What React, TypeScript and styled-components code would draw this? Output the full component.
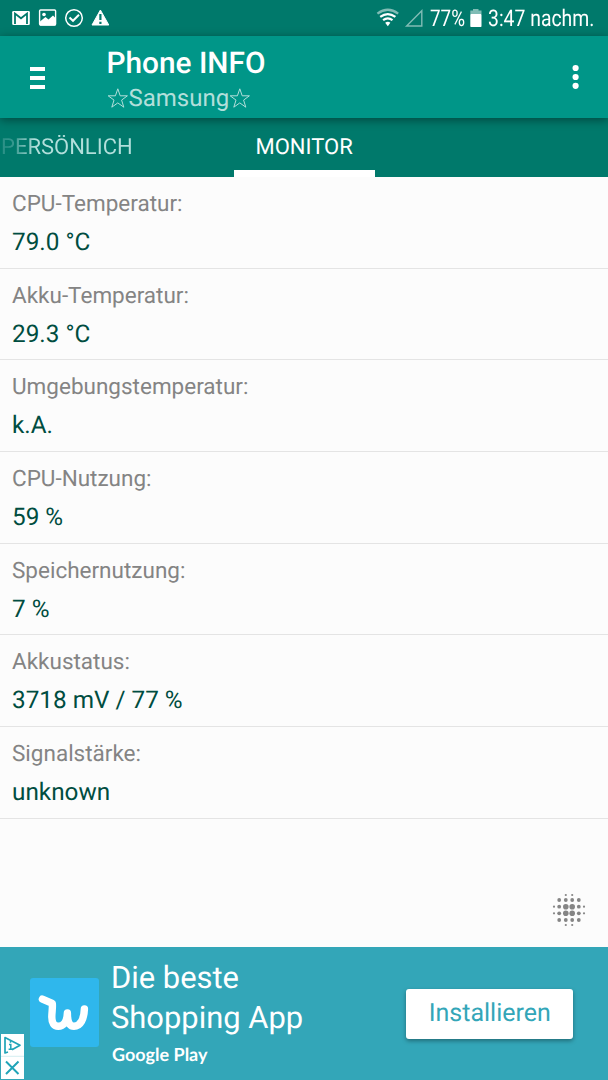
import React from 'react';
import styled, { createGlobalStyle } from 'styled-components';

const Global = createGlobalStyle`
  * { box-sizing: border-box; }
  html, body { margin: 0; padding: 0; }
  body {
    font-family: Roboto, "Noto Sans", sans-serif;
    background: #fcfcfc;
    text-rendering: geometricPrecision;
  }
`;

const Screen = styled.div`
  width: 608px;
  height: 1080px;
  display: flex;
  flex-direction: column;
  overflow: hidden;
  background: #fcfcfc;
`;

const StatusBar = styled.div`
  height: 36px;
  flex: none;
  display: flex;
  justify-content: space-between;
  background: #00796b;
  color: #fff;
`;

const StatusIcons = styled.svg`
  display: block;
  flex: none;
`;

const StatusRight = styled.div`
  display: flex;
  width: 232px;
`;

const StatusText = styled.span<{ $width: number; $scale: number }>`
  width: ${(p) => p.$width}px;
  font-size: 23px;
  line-height: 38px;
  white-space: nowrap;
  transform: scaleX(${(p) => p.$scale});
  transform-origin: 0 50%;
`;

const Toolbar = styled.header`
  height: 82px;
  flex: none;
  display: flex;
  align-items: flex-start;
  background: #009688;
  color: #fff;
  position: relative;
  box-shadow: 0 2px 9px rgba(0, 0, 0, 0.42);
`;

const IconButton = styled.button<{ $width: number }>`
  width: ${(p) => p.$width}px;
  height: 82px;
  padding: 0;
  border: 0;
  background: none;
  svg { display: block; }
`;

const Titles = styled.div`
  flex: 1;
  padding: 10px 0 0 32.5px;
`;

const Title = styled.h1`
  margin: 0;
  height: 34px;
  font-size: 29.8px;
  line-height: 35px;
  font-weight: 500;
  white-space: nowrap;
`;

const Subtitle = styled.div`
  display: flex;
  align-items: center;
  height: 36px;
  font-size: 24px;
  line-height: 36px;
  color: #b2dfdb;
`;

const Star = styled.svg`
  display: block;
  flex: none;
`;

const Tabs = styled.nav`
  height: 59px;
  flex: none;
  display: flex;
  background: #00796b;
`;

const Tab = styled.div<{ $active?: boolean; $width: number }>`
  width: ${(p) => p.$width}px;
  margin-left: ${(p) => (p.$active ? 101.5 : 0)}px;
  padding-left: ${(p) => (p.$active ? 22 : 1)}px;
  font-size: 22px;
  line-height: 59px;
  white-space: nowrap;
  color: ${(p) => (p.$active ? '#fff' : '#b2dfdb')};
  box-shadow: ${(p) => (p.$active ? 'inset 0 -7px #fff' : 'none')};
`;

const FadedText = styled.span`
  background: linear-gradient(90deg, #2a9086 0, #35978e 12px, #b2dfdb 34px);
  background-clip: text;
  color: transparent;
`;

const List = styled.main`
  height: 770px;
  flex: none;
  position: relative;
`;

const Row = styled.section`
  height: 91.7px;
  padding: 9px 12px 0;
  border-bottom: 1px solid #e4e4e4;
`;

const Label = styled.div`
  height: 36px;
  font-size: 22.5px;
  line-height: 36px;
  color: #848484;
`;

const Value = styled.div`
  height: 38px;
  font-size: 24.3px;
  line-height: 40px;
  color: #004d40;
`;

const DotsMark = styled.svg`
  position: absolute;
  left: 549.4px;
  top: 713.3px;
`;

const Ad = styled.footer`
  height: 133px;
  flex: none;
  display: flex;
  align-items: flex-start;
  background: #33a6b8;
  color: #fff;
  position: relative;
`;

const AppIcon = styled.svg`
  display: block;
  flex: none;
  margin: 31px 0 0 30px;
`;

const AdCopy = styled.div`
  width: 307px;
  padding: 11px 0 0 12px;
`;

const AdLine = styled.div`
  font-size: 30.9px;
  line-height: 39.5px;
  white-space: nowrap;
`;

const Store = styled.div`
  padding: 5px 0 0 1px;
  font-family: Lato, sans-serif;
  font-weight: 700;
  font-size: 18px;
  line-height: 24px;
  white-space: nowrap;
`;

const Install = styled.button`
  width: 167px;
  height: 50px;
  margin: 42px 0 0 0.3px;
  padding: 0;
  border: 0;
  border-radius: 3px;
  background: #fff;
  color: #33a6b8;
  font: 400 25px/48px Roboto, sans-serif;
  text-rendering: inherit;
  box-shadow: 0 2px 4px rgba(0, 0, 0, 0.35);
`;

const AdChoices = styled.svg`
  position: absolute;
  left: 1px;
  top: 87px;
`;

const readings = [
  ['CPU-Temperatur:', '79.0 °C'],
  ['Akku-Temperatur:', '29.3 °C'],
  ['Umgebungstemperatur:', 'k.A.'],
  ['CPU-Nutzung:', '59 %'],
  ['Speichernutzung:', '7 %'],
  ['Akkustatus:', '3718 mV / 77 %'],
  ['Signalstärke:', 'unknown'],
];

/* x, y and radius of one quadrant of the dot pattern, mirrored around its centre */
const quadrant = [
  [3.2, 3.3, 2.8],
  [9.8, 3.3, 1.9],
  [3.2, 10, 1.9],
  [9.8, 10, 1.9],
  [3.2, 15, 1.1],
  [15, 3.3, 1.1],
];

const StarIcon = () => (
  <Star width="22" height="36" viewBox="0 0 22 36">
    <path
      d="M10.8 8.8L13.2 15.8H20.4L14.6 20.1L16.8 27.2L10.8 22.9L4.8 27.2L7 20.1L1.2 15.8H8.4Z"
      fill="none"
      stroke="#b2dfdb"
      strokeWidth="1"
    />
  </Star>
);

export default function App() {
  return (
    <>
      <Global />
      <Screen>
        <StatusBar>
          <StatusIcons width="120" height="36" viewBox="0 0 120 36" fill="none">
            <rect x="12.2" y="11" width="17.6" height="14" rx="1.2" fill="#fff" />
            <path d="M15 24V13.5L21 18.3L27 13.5V24" stroke="#00796b" strokeWidth="1.8" />
            <rect x="39.6" y="10" width="16" height="15" rx="1" stroke="#fff" strokeWidth="1.4" />
            <path d="M40 21.5L45.5 17L48.5 19.5L53 15.5L55.5 18V25.5H40Z" fill="#fff" />
            <circle cx="44" cy="14.5" r="1.8" fill="#fff" />
            <circle cx="74" cy="18" r="8.3" stroke="#fff" strokeWidth="1.5" />
            <path d="M69.5 17.5L73 20.8L79 14.7" stroke="#fff" strokeWidth="2" />
            <path d="M100.4 10L108.8 25H92Z" fill="#fff" stroke="#fff" strokeLinejoin="round" />
            <path d="M100.4 14V20M100.4 21.7V24" stroke="#00796b" strokeWidth="2.2" />
          </StatusIcons>
          <StatusRight>
            <StatusIcons width="54" height="36" viewBox="0 0 54 36" fill="none">
              <path d="M1.4 13.6Q11.8 6 22.2 13.6" stroke="#80bcb5" strokeWidth="2.3" />
              <path d="M4.2 16.9Q11.8 11.2 19.4 16.9" stroke="#fff" strokeWidth="2.2" />
              <path d="M7.1 20.2Q11.8 16.6 16.5 20.2" stroke="#fff" strokeWidth="2.2" />
              <path d="M9.2 22.8Q11.8 20.8 14.4 22.8L11.8 26.2Z" fill="#fff" />
              <path d="M45.8 10.8V26H30.6Z" stroke="#80bcb5" strokeWidth="1.4" />
            </StatusIcons>
            <StatusText $width={38.5} $scale={0.82}>77%</StatusText>
            <StatusIcons width="19" height="36" viewBox="0 0 19 36">
              <path d="M4 9H9.5V10.5H12.5V14H1.3V10.5H4Z" fill="#80bcb5" />
              <rect x="1.3" y="14" width="11.2" height="13" rx=".7" fill="#fff" />
            </StatusIcons>
            <StatusText $width={120} $scale={0.843}>3:47 nachm.</StatusText>
          </StatusRight>
        </StatusBar>

        <Toolbar>
          <IconButton $width={74} aria-label="Menu">
            <svg width="74" height="82" fill="#fff">
              <rect x="30" y="31" width="15" height="4" />
              <rect x="30" y="40" width="15" height="4" />
              <rect x="30" y="49" width="15" height="4" />
            </svg>
          </IconButton>
          <Titles>
            <Title>Phone INFO</Title>
            <Subtitle><StarIcon />Samsung<StarIcon /></Subtitle>
          </Titles>
          <IconButton $width={66} aria-label="More">
            <svg width="66" height="82" fill="#fff">
              <circle cx="33.6" cy="32" r="3.1" />
              <circle cx="33.6" cy="41" r="3.1" />
              <circle cx="33.6" cy="49.8" r="3.1" />
            </svg>
          </IconButton>
        </Toolbar>

        <Tabs>
          <Tab $width={132}><FadedText>PERSÖNLICH</FadedText></Tab>
          <Tab $active $width={141}>MONITOR</Tab>
        </Tabs>

        <List>
          {readings.map(([label, value]) => (
            <Row key={label}>
              <Label>{label}</Label>
              <Value>{value}</Value>
            </Row>
          ))}
          <DotsMark width="40" height="40" viewBox="-20 -20 40 40" fill="#858585">
            {quadrant.flatMap(([x, y, r]) =>
              [[1, 1], [1, -1], [-1, 1], [-1, -1]].map(([sx, sy]) => (
                <circle key={`${x * sx},${y * sy}`} cx={x * sx} cy={y * sy} r={r} />
              ))
            )}
          </DotsMark>
        </List>

        <Ad>
          <AppIcon width="69" height="69" viewBox="0 0 69 69">
            <rect width="69" height="69" rx="3" fill="#2fb7ec" />
            <path
              d="M12.4 21.2L22.3 25.4C22.8 30 21.8 34 21.8 39C21.8 45 24 48.3 28.2 48.3C33.4 48.3 37 44 37.4 35C37.4 44 39.5 48.3 44 48.3C50.5 48.3 54 41 54.4 31"
              fill="none"
              stroke="#fff"
              strokeWidth="7.4"
              strokeLinejoin="round"
              strokeLinecap="round"
            />
          </AppIcon>
          <AdCopy>
            <AdLine>Die beste</AdLine>
            <AdLine>Shopping App</AdLine>
            <Store>Google Play</Store>
          </AdCopy>
          <Install>Installieren</Install>
          <AdChoices width="23" height="45" viewBox="0 0 23 45" fill="none" stroke="#20a4b8">
            <rect width="23" height="45" fill="#fff" stroke="none" />
            <path d="M0 22.3H23" stroke="#c8e8ec" strokeWidth=".8" />
            <path d="M7 18L4 19V3.5L19 11.2L11 15.8" strokeWidth="1.7" strokeLinejoin="round" />
            <path d="M9.5 7V8.8M8 10.6H9.8V15.2M7.6 15.2H12" strokeWidth="1.5" />
            <path d="M5 27.5L17.5 40M17.5 27.5L5 40" strokeWidth="2" />
          </AdChoices>
        </Ad>
      </Screen>
    </>
  );
}
